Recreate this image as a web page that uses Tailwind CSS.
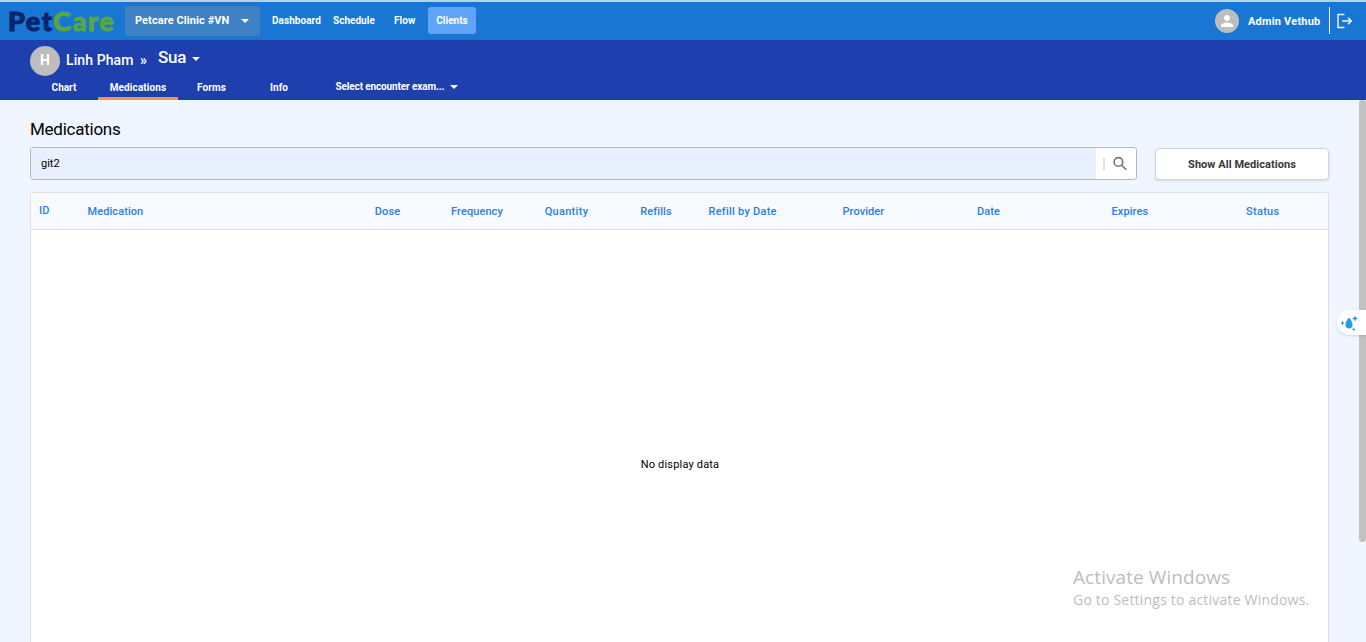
<!DOCTYPE html>
<html lang="en">
<head>
<meta charset="utf-8"/>
<title>PetCare - Medications</title>
<script src="https://cdn.jsdelivr.net/npm/@tailwindcss/browser@4"></script>
</head>
<body class="h-screen overflow-hidden bg-[#eff6ff] font-['Roboto',sans-serif] text-[11px] text-black">
<div class="flex h-full flex-col">

<!-- Top bar -->
<header class="flex h-10 shrink-0 items-center border-t-2 border-[#bfd0da] bg-[#1976d2] pl-2 font-bold text-white">
<div class="w-[117px] whitespace-nowrap font-['Lato',sans-serif] text-[27px] leading-[38px] font-black tracking-[1.5px] text-[#06246b] [-webkit-text-stroke:1px_currentColor]">Pet<span class="text-[#56a646]">Care</span></div>
<button class="flex h-[30px] w-[135px] items-center justify-between rounded bg-[#3f81c5] pr-[11px] pl-[10px] whitespace-nowrap">
<span class="tracking-[0.08px]">Petcare Clinic #VN</span>
<svg class="h-1 w-2" viewBox="0 0 8 4" fill="currentColor"><path d="M0 0h8L4 4z"/></svg>
</button>
<nav class="-mt-px flex items-center text-[10px] whitespace-nowrap">
<a class="ml-3 w-[61px] tracking-[0.05px]">Dashboard</a>
<a class="w-[61px] tracking-[0.02px]">Schedule</a>
<a class="w-[34px] tracking-[0.1px]">Flow</a>
<a class="flex h-[27px] w-12 items-center justify-center rounded-[3px] bg-[#60a5fa]">Clients</a>
</nav>
<div class="ml-auto flex items-center">
<div class="flex h-6 w-6 items-center justify-center rounded-full bg-[#bdbdbd]">
<svg class="h-[18px] w-[18px]" viewBox="0 0 24 24" fill="#fff"><path d="M12 12c2.21 0 4-1.79 4-4s-1.79-4-4-4-4 1.79-4 4 1.79 4 4 4zm0 2c-2.67 0-8 1.34-8 4v2h16v-2c0-2.66-5.33-4-8-4z"/></svg>
</div>
<span class="mt-0.5 ml-[9px] w-[81px] whitespace-nowrap tracking-[0.2px]">Admin Vethub</span>
<div class="-mt-px h-[27px] w-px bg-white"></div>
<svg class="mr-[13px] ml-[7px] h-4 w-4" viewBox="0 0 16 16" fill="none" stroke="#fff" stroke-opacity=".9" stroke-width="1.5"><path d="M7.5 1.5H1v13h6.5M5 8h9M11 4.7 14.3 8 11 11.3"/></svg>
</div>
</header>

<!-- Patient bar -->
<section class="flex h-[60px] shrink-0 flex-col justify-between bg-[#1e40af] text-white">
<div class="flex h-9 items-start pt-1.5 pl-[30px] font-bold">
<div class="flex h-[30px] w-[30px] items-center justify-center rounded-full bg-[#bdbdbd] pb-0.5 text-sm">H</div>
<span class="mt-1 ml-1.5 w-[74px] whitespace-nowrap text-sm leading-5 font-medium tracking-[0.1px]">Linh Pham</span>
<span class="mt-1 w-[18px] text-sm leading-5">»</span>
<span class="w-[34px] text-[17px] leading-[22px] font-medium tracking-[-0.2px]">Sua</span>
<svg class="mt-[11px] h-1 w-2" viewBox="0 0 8 4" fill="currentColor"><path d="M0 0h8L4 4z"/></svg>
</div>
<div class="flex h-6 items-stretch pl-[30px] text-[10px] leading-6 font-bold whitespace-nowrap">
<a class="w-[68px] text-center">Chart</a>
<a class="w-20 border-b-[3px] border-[#fb923c] text-center tracking-[0.1px]">Medications</a>
<a class="w-[67px] text-center tracking-[0.1px]">Forms</a>
<a class="w-[68px] text-center tracking-[0.1px]">Info</a>
<button class="flex w-[145px] items-center justify-between pb-[3px] pl-[22.5px]">
<span class="leading-[22px] tracking-[-0.13px]">Select encounter exam...</span>
<svg class="mt-px h-1 w-2" viewBox="0 0 8 4" fill="currentColor"><path d="M0 0h8L4 4z"/></svg>
</button>
</div>
</section>

<!-- Page content -->
<main class="flex min-h-0 flex-1 flex-col pr-[37px] pl-[30px]">
<h1 class="mt-[17px] text-[17px] leading-6 tracking-[-0.25px]">Medications</h1>
<div class="mt-1.5 flex h-[33px] shrink-0">
<div class="flex w-[1107px] items-center rounded-[3px] border border-[#b0bac9] bg-white">
<div class="flex h-full w-[1065px] items-center rounded-l-[2px] bg-[#e8f0fe] pt-px pl-[10px]">git2</div>
<div class="ml-[7px] h-3 w-0.5 bg-[#dcdfe5]"></div>
<svg class="ml-2 h-[15px] w-[15px]" viewBox="0 0 15 15" fill="none" stroke="#757575" stroke-width="1.6"><circle cx="5.4" cy="5.9" r="4.3"/><path d="m8.5 9 4.800 4.800"/></svg>
</div>
<button class="mt-px ml-[18px] h-8 w-[174px] rounded border border-[#d1d5db] bg-white pt-0.5 font-bold tracking-[0.05px] text-[#373737] shadow">Show All Medications</button>
</div>

<div class="mt-3 flex min-h-0 flex-1 flex-col rounded-t-[3px] border border-b-0 border-[#e0e0e0] bg-white">
<div class="grid h-[37px] shrink-0 grid-cols-[48px_263px_90px_89px_90px_90px_134px_135px_134px_135px_89px] items-center border-b border-[#e0e0e0] bg-[#f7fafe] pt-0.5 font-medium tracking-[0.08px] whitespace-nowrap text-[#2b7de9]">
<div class="-mt-0.5 pl-2">ID</div>
<div class="pl-[8.5px]">Medication</div>
<div class="pl-px text-center">Dose</div>
<div class="pl-px text-center">Frequency</div>
<div class="pl-px text-center tracking-[0.3px]">Quantity</div>
<div class="text-center">Refills</div>
<div class="pl-[7.5px] tracking-[0.25px]">Refill by Date</div>
<div class="pl-[7.5px]">Provider</div>
<div class="pl-[7px]">Date</div>
<div class="pl-[7.5px]">Expires</div>
<div class="pl-[7px] tracking-[0.3px]">Status</div>
</div>
<div class="flex-1 pt-[227px] pl-px text-center leading-4 tracking-[0.18px]">No display data</div>
</div>
</main>
</div>

<!-- Scrollbar thumb -->
<div class="absolute top-[100px] right-0 h-[442px] w-[7px] rounded-t-[3px] rounded-b-[4px] bg-[#c1c1c1]"></div>

<!-- Assistant tab -->
<div class="absolute top-[310px] right-0 flex h-[25px] w-[29px] items-center rounded-l-full bg-white pl-1 shadow">
<svg class="h-4 w-[17px]" viewBox="0 0 17 16" fill="#2499ed"><path d="M8 2.5c2 2.5 3.5 4.9 3.5 7.2a3.5 3.8 0 0 1-7 0C4.500 7.400 6 5 8 2.500z"/><path d="m1.500 5.500.7 1.800 1.500.7-1.500.7-.7 1.800-.7-1.800L-.5 8l1.300-.7zM14 .5l.9 2.100 2.100.9-2.100.9-.9 2.100-.9-2.100-2.100-.9 2.100-.9zM12.800 12.500l.6 1.300 1.300.6-1.300.6-.6 1-.6-1-1.300-.6 1.300-.6z"/></svg>
</div>

<!-- Windows watermark -->
<div class="absolute top-[564px] left-[1073px] font-['Open_Sans',sans-serif] whitespace-nowrap text-[#bdbdbd]">
<div class="text-[19px] leading-[26px] tracking-[0.08px]">Activate Windows</div>
<div class="text-sm leading-5 tracking-[0.2px]">Go to Settings to activate Windows.</div>
</div>
</body>
</html>
